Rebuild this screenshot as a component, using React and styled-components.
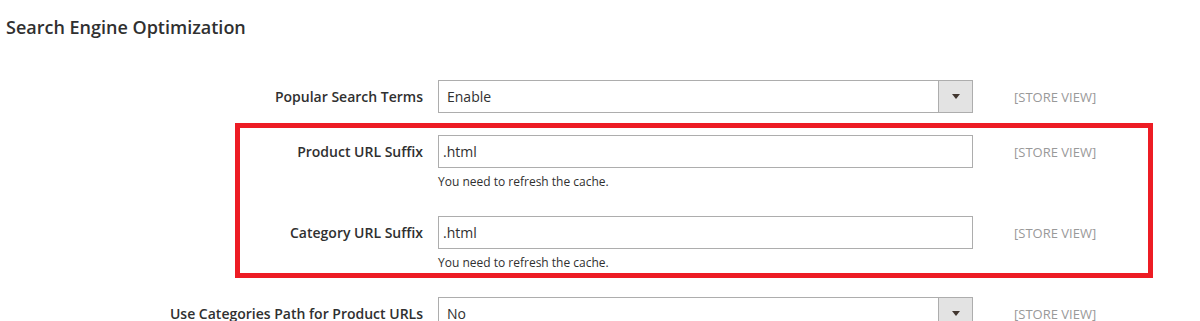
import styled, { createGlobalStyle } from "styled-components";

const GlobalStyle = createGlobalStyle`
  body {
    margin: 0;
    background: #fff;
    font-family: "Open Sans", "Noto Sans", sans-serif;
    color: #303030;
  }
`;

const Page = styled.div`
  width: 1200px;
  height: 321px;
  overflow: hidden;
`;

const Title = styled.h2`
  margin: 17px 0 0;
  padding-left: 6px;
  font-size: 18px;
  line-height: 20px;
  font-weight: 600;
  color: #303030;
`;

const Fieldset = styled.div`
  padding-top: 43px;
`;

const Row = styled.div`
  display: grid;
  grid-template-columns: ${(p) => p.$labelWidth || 438}px 535px 1fr;
  align-items: start;
  margin-top: ${(p) => p.$top || 0}px;
`;

const Label = styled.label`
  box-sizing: border-box;
  height: 33px;
  padding-right: 15px;
  text-align: right;
  font-size: 14px;
  font-weight: 600;
  line-height: 33px;
  white-space: nowrap;
  color: #303030;
`;

const Value = styled.div`
  display: flex;
  flex-direction: column;
`;

const TextInput = styled.input`
  display: block;
  box-sizing: border-box;
  width: 535px;
  height: 33px;
  margin: 0;
  padding: 0 0 0 4px;
  border: 1px solid #adadad;
  border-radius: 0;
  font-family: inherit;
  font-size: 14px;
  color: #303030;
  background: #fff;
  outline: none;
`;

const SelectBox = styled.div`
  box-sizing: border-box;
  display: flex;
  width: 535px;
  height: 33px;
  border: 1px solid #adadad;
  background: #fff;
`;

const SelectValue = styled.span`
  flex: 1;
  padding-left: 8px;
  font-size: 14px;
  line-height: 31px;
  color: #303030;
`;

const ArrowBox = styled.span`
  display: flex;
  align-items: center;
  justify-content: center;
  width: 33px;
  border-left: 1px solid #adadad;
  background: #e3e3e3;

  &::after {
    content: "";
    border-left: 4px solid transparent;
    border-right: 4px solid transparent;
    border-top: 5px solid #41362f;
  }
`;

const Note = styled.div`
  margin-top: 5px;
  font-size: 12px;
  line-height: 18px;
  color: #303030;
`;

const Scope = styled.div`
  height: 33px;
  padding-left: 41px;
  font-size: 13px;
  line-height: 34px;
  color: #999;
`;

const Highlight = styled.div`
  box-sizing: border-box;
  width: 918px;
  margin: 10px 0 0 235px;
  padding: 7px 0 1px;
  border: 5px solid #ed1c24;
`;

const SelectRow = ({ label, value, top }) => (
  <Row $top={top}>
    <Label>{label}</Label>
    <Value>
      <SelectBox>
        <SelectValue>{value}</SelectValue>
        <ArrowBox />
      </SelectBox>
    </Value>
    <Scope>[STORE VIEW]</Scope>
  </Row>
);

const InputRow = ({ label, value, note, top, labelWidth }) => (
  <Row $top={top} $labelWidth={labelWidth}>
    <Label>{label}</Label>
    <Value>
      <TextInput defaultValue={value} />
      {note && <Note>{note}</Note>}
    </Value>
    <Scope>[STORE VIEW]</Scope>
  </Row>
);

export default function App() {
  return (
    <Page>
      <GlobalStyle />
      <Title>Search Engine Optimization</Title>
      <Fieldset>
        <SelectRow label="Popular Search Terms" value="Enable" />
        <Highlight>
          <InputRow
            labelWidth={198}
            label="Product URL Suffix"
            value=".html"
            note="You need to refresh the cache."
          />
          <InputRow
            labelWidth={198}
            top={25}
            label="Category URL Suffix"
            value=".html"
            note="You need to refresh the cache."
          />
        </Highlight>
        <SelectRow top={19} label="Use Categories Path for Product URLs" value="No" />
      </Fieldset>
    </Page>
  );
}
